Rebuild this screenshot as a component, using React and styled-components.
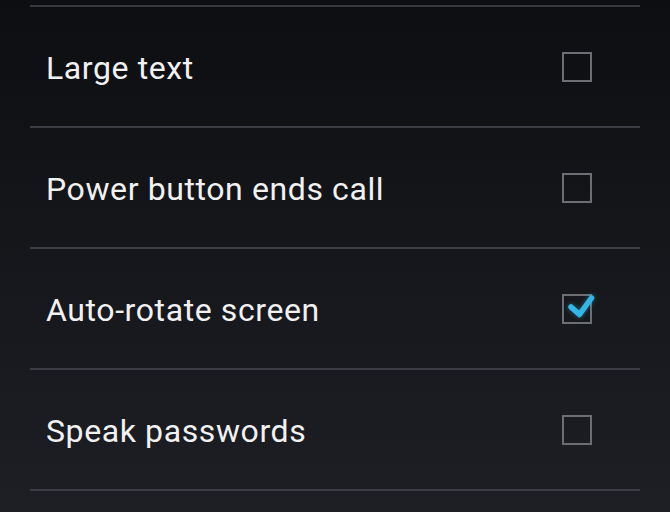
import styled, { createGlobalStyle } from "styled-components";

const GlobalStyle = createGlobalStyle`
  html, body {
    margin: 0;
    padding: 0;
    height: 100%;
    background: #0c0e11;
  }
  #root {
    height: 100%;
  }
`;

const settings = [
  { label: "Large text", checked: false },
  { label: "Power button ends call", checked: false },
  { label: "Auto-rotate screen", checked: true },
  { label: "Speak passwords", checked: false },
];

const App = () => {
  return (
    <>
      <GlobalStyle />
      <Screen>
        <List>
          {settings.map((item) => (
            <Item key={item.label}>
              <Label>{item.label}</Label>
              <Box>
                {item.checked && (
                  <Check viewBox="0 0 40 32" aria-hidden="true">
                    <path
                      d="M9 13 L17.5 20.5 L29.5 4"
                      fill="none"
                      stroke="#33b5e5"
                      strokeWidth="5.5"
                      strokeLinecap="round"
                      strokeLinejoin="round"
                    />
                  </Check>
                )}
              </Box>
            </Item>
          ))}
        </List>
      </Screen>
    </>
  );
};

const Screen = styled.div`
  width: 670px;
  height: 512px;
  overflow: hidden;
  background: linear-gradient(180deg, #0c0e11 0%, #14161a 45%, #1d1f25 100%);
  font-family: Roboto, "Noto Sans", sans-serif;
  padding-top: 5px;
  box-sizing: border-box;
`;

const List = styled.div`
  margin: 0 30px;
  border-top: 2px solid #35383d;
`;

const Item = styled.div`
  height: 119px;
  display: flex;
  align-items: center;
  justify-content: space-between;
  padding: 0 48px 0 16px;
  border-bottom: 2px solid #3a3d43;
`;

const Label = styled.span`
  color: #f1f1f1;
  font-size: 32px;
  letter-spacing: 0.6px;
  padding-top: 3px;
`;

const Box = styled.div`
  position: relative;
  width: 26px;
  height: 26px;
  border: 2px solid #6b6e72;
  margin-top: 1px;
`;

const Check = styled.svg`
  position: absolute;
  left: -2px;
  top: -2px;
  width: 40px;
  height: 32px;
  overflow: visible;
  filter: drop-shadow(0 0 2px rgba(51, 181, 229, 0.55));
`;

export default App;
